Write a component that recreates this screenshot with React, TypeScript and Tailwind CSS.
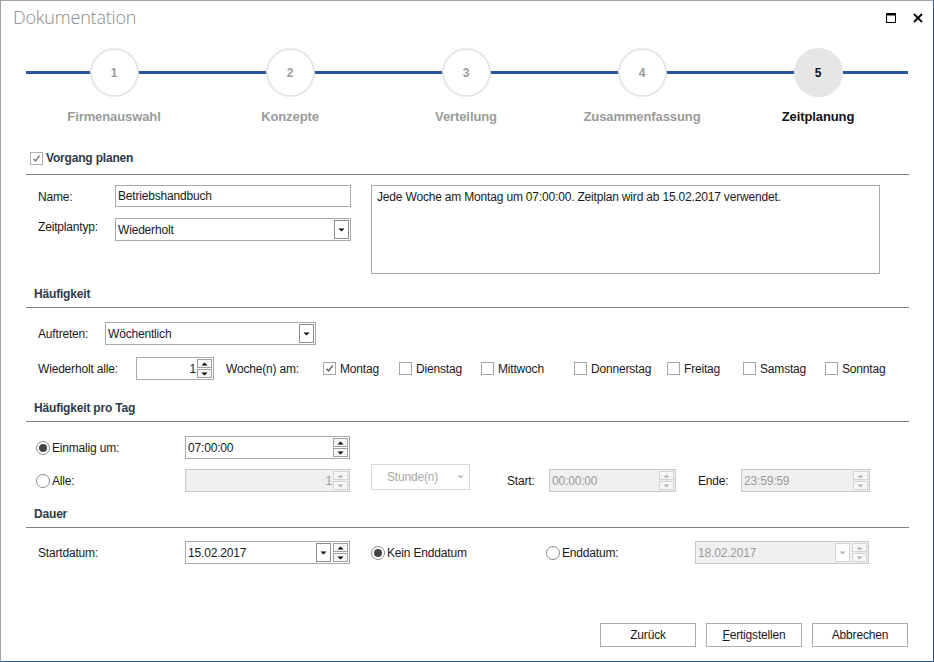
import React from "react";

const F = { fontFamily: '"Liberation Sans", Arial, sans-serif' };

function Arrow({ dir = "down", disabled = false }: { dir?: "up" | "down"; disabled?: boolean }) {
  const c = disabled ? "#b5b5b5" : "#000";
  return (
    <svg width="7" height="4" viewBox="0 0 7 4">
      {dir === "down" ? <polygon points="0.5,0.5 6.5,0.5 3.5,3.5" fill={c} /> : <polygon points="0.5,3.5 6.5,3.5 3.5,0.5" fill={c} />}
    </svg>
  );
}

function Spin({ disabled = false }: { disabled?: boolean }) {
  const b = disabled ? "border-[#d4d4d4]" : "border-[#a0a0a0]";
  return (
    <div className="flex flex-col gap-[1px] mr-[1px]">
      <div className={`w-[15px] h-[9px] border ${b} bg-[#f7f7f7] flex items-center justify-center`}>
        <Arrow dir="up" disabled={disabled} />
      </div>
      <div className={`w-[15px] h-[9px] border ${b} bg-[#f7f7f7] flex items-center justify-center`}>
        <Arrow dir="down" disabled={disabled} />
      </div>
    </div>
  );
}

function DropBtn({ disabled = false }: { disabled?: boolean }) {
  return (
    <div className={`w-[15px] h-[19px] border ${disabled ? "border-[#d4d4d4]" : "border-[#8c8c8c]"} bg-white flex items-center justify-center mr-[1px]`}>
      <Arrow disabled={disabled} />
    </div>
  );
}

function Check({ checked = false, label }: { checked?: boolean; label: string }) {
  return (
    <div className="flex items-center gap-[4px]">
      <div className="w-[13px] h-[13px] border border-[#a6a6a6] bg-white flex items-center justify-center">
        {checked && (
          <svg width="9" height="9" viewBox="0 0 9 9">
            <path d="M1.5 4.8 L3.6 7 L7.6 1.6" stroke="#5a5a5a" strokeWidth="1.4" fill="none" />
          </svg>
        )}
      </div>
      <span className="text-[12px] text-[#1a1a1a]">{label}</span>
    </div>
  );
}

function Radio({ checked = false, label }: { checked?: boolean; label: string }) {
  return (
    <div className="flex items-center gap-[2px]">
      <div className="w-[14px] h-[14px] rounded-full border border-[#8a8a8a] bg-white flex items-center justify-center">
        {checked && <div className="w-[8px] h-[8px] rounded-full bg-[#444]" />}
      </div>
      <span className="text-[12px] text-[#1a1a1a]">{label}</span>
    </div>
  );
}

function Header({ text }: { text: string }) {
  return (
    <>
      <div className="pl-[8px] h-[16px] leading-[16px] text-[12px] font-bold text-[#2e3a48]">{text}</div>
      <div className="mt-[5px] h-[1px] bg-[#7f7f7f]" />
    </>
  );
}

const steps = ["Firmenauswahl", "Konzepte", "Verteilung", "Zusammenfassung", "Zeitplanung"];

export default function App() {
  return (
    <div
      style={F}
      className="w-[934px] h-[662px] bg-white border-l border-t border-[#a3a3a3] border-r border-b border-r-[#2b579a] border-b-[#2b579a] flex flex-col text-[12px] tracking-[-0.18px] text-[#1a1a1a] overflow-hidden"
    >
      {/* Title bar */}
      <div className="h-[33px] flex items-center pl-[12px] pr-[10px]">
        <div className="text-[18px] text-[#8a8a8a] tracking-[-0.2px]" style={{ fontFamily: '"Open Sans", "Liberation Sans", sans-serif', fontWeight: 300 }}>
          Dokumentation
        </div>
        <div className="ml-auto flex items-center gap-[17px] mt-[1px]">
          <svg width="10" height="10" viewBox="0 0 10 10">
            <rect x="0.5" y="0.5" width="9" height="9" fill="none" stroke="#000" strokeWidth="1" />
            <rect x="0" y="0" width="10" height="2.5" fill="#000" />
          </svg>
          <svg width="10" height="10" viewBox="0 0 10 10">
            <path d="M1 1 L9 9 M9 1 L1 9" stroke="#000" strokeWidth="1.8" />
          </svg>
        </div>
      </div>

      {/* Stepper */}
      <div className="relative pl-[25px] mt-[1px]">
        <div className="absolute left-[25px] top-[36px] w-[882px] h-[3px] bg-[#2b579a]" />
        <div className="relative grid grid-cols-[repeat(5,176px)] mt-[13px]">
          {steps.map((s, i) => {
            const active = i === 4;
            return (
              <div key={s} className="flex flex-col items-center">
                <div
                  className={`w-[49px] h-[49px] rounded-full flex items-center justify-center text-[12px] font-bold ${
                    active ? "bg-[#e6e6e6] text-[#111]" : "bg-white border-2 border-[#e6e6e6] text-[#9a9a9a]"
                  }`}
                >
                  {i + 1}
                </div>
                <div className={`mt-[12px] h-[16px] leading-[16px] text-[13px] font-bold tracking-[-0.1px] ${active ? "text-[#111]" : "text-[#9a9a9a]"}`}>{s}</div>
              </div>
            );
          })}
        </div>
      </div>

      {/* Content */}
      <div className="pl-[25px] w-[908px] flex flex-col">
        <div className="mt-[25px] pl-[4px] h-[16px] flex items-center">
          <div className="flex items-center gap-[3px]">
            <div className="w-[13px] h-[13px] border border-[#b0b0b0] bg-white flex items-center justify-center">
              <svg width="9" height="9" viewBox="0 0 9 9">
                <path d="M1.5 4.8 L3.6 7 L7.6 1.6" stroke="#7a7a7a" strokeWidth="1.4" fill="none" />
              </svg>
            </div>
            <span className="text-[12px] font-bold text-[#2e3a48]">Vorgang planen</span>
          </div>
        </div>
        <div className="mt-[8px] h-[1px] bg-[#7f7f7f]" />

        {/* Name / type */}
        <div className="mt-[10px] flex">
          <div className="w-[345px] flex flex-col gap-[11px]">
            <div className="flex items-center h-[22px]">
              <div className="pl-[12px] w-[89px] mt-[1px]">Name:</div>
              <div className="w-[236px] h-[22px] border border-[#a9a9a9] flex items-center pl-[2px]">Betriebshandbuch</div>
            </div>
            <div className="flex items-center h-[23px]">
              <div className="pl-[12px] w-[89px] -mt-[5px]">Zeitplantyp:</div>
              <div className="w-[236px] h-[23px] border border-[#a9a9a9] flex items-center pl-[2px]">
                <span className="pt-[1px]">Wiederholt</span>
                <div className="ml-auto"><DropBtn /></div>
              </div>
            </div>
          </div>
          <div className="w-[509px] h-[89px] border border-[#a9a9a9] px-[5px] pt-[2px]">
            Jede Woche am Montag um 07:00:00. Zeitplan wird ab 15.02.2017 verwendet.
          </div>
        </div>

        <div className="mt-[12px]">
          <Header text="Häufigkeit" />
        </div>

        <div className="mt-[14px] flex items-center h-[23px]">
          <div className="pl-[12px] w-[79px]">Auftreten:</div>
          <div className="w-[211px] h-[23px] border border-[#a9a9a9] flex items-center pl-[2px]">
            <span>Wöchentlich</span>
            <div className="ml-auto"><DropBtn /></div>
          </div>
        </div>

        <div className="mt-[12px] flex items-center h-[23px]">
          <div className="pl-[12px] w-[110px]">Wiederholt alle:</div>
          <div className="w-[78px] h-[23px] border border-[#a9a9a9] flex items-center justify-end">
            <span className="mr-[1px]">1</span>
            <Spin />
          </div>
          <div className="ml-[12px] w-[97px]">Woche(n) am:</div>
          <div className="w-[76px]"><Check checked label="Montag" /></div>
          <div className="w-[82px]"><Check label="Dienstag" /></div>
          <div className="w-[93px]"><Check label="Mittwoch" /></div>
          <div className="w-[93px]"><Check label="Donnerstag" /></div>
          <div className="w-[76px]"><Check label="Freitag" /></div>
          <div className="w-[82px]"><Check label="Samstag" /></div>
          <div><Check label="Sonntag" /></div>
        </div>

        <div className="mt-[20px]">
          <Header text="Häufigkeit pro Tag" />
        </div>

        <div className="mt-[14px] flex items-center h-[23px]">
          <div className="pl-[10px] w-[159px] mt-[1px]"><Radio checked label="Einmalig um:" /></div>
          <div className="w-[165px] h-[23px] border border-[#a9a9a9] flex items-center pl-[2px]">
            <span className="pt-[1px]">07:00:00</span>
            <div className="ml-auto"><Spin /></div>
          </div>
        </div>

        <div className="mt-[10px] flex items-center h-[23px]">
          <div className="pl-[10px] w-[159px]"><Radio label="Alle:" /></div>
          <div className="w-[165px] h-[23px] border border-[#c8c8c8] bg-[#f0f0f0] flex items-center justify-end text-[#9a9a9a]">
            <span className="mr-[1px]">1</span>
            <Spin disabled />
          </div>
          <div className="ml-[21px] w-[99px] h-[26px] -mt-[7px] border border-[#d9d9d9] bg-white flex items-center text-[#a8a8a8]">
            <span className="pl-[15px]">Stunde(n)</span>
            <div className="ml-auto mr-[5px]"><Arrow disabled /></div>
          </div>
          <div className="ml-[37px] w-[42px]">Start:</div>
          <div className="w-[127px] h-[23px] border border-[#c8c8c8] bg-[#f0f0f0] flex items-center pl-[2px] text-[#9a9a9a]">
            <span className="pt-[1px]">00:00:00</span>
            <div className="ml-auto"><Spin disabled /></div>
          </div>
          <div className="ml-[22px] w-[43px]">Ende:</div>
          <div className="w-[129px] h-[23px] border border-[#c8c8c8] bg-[#f0f0f0] flex items-center pl-[2px] text-[#9a9a9a]">
            <span className="pt-[1px]">23:59:59</span>
            <div className="ml-auto"><Spin disabled /></div>
          </div>
        </div>

        <div className="mt-[14px]">
          <Header text="Dauer" />
        </div>

        <div className="mt-[13px] flex items-center h-[23px]">
          <div className="pl-[12px] w-[159px] mt-[1px]">Startdatum:</div>
          <div className="w-[165px] h-[23px] border border-[#a9a9a9] flex items-center pl-[2px]">
            <span className="pt-[1px]">15.02.2017</span>
            <div className="ml-auto flex items-center gap-[1px]">
              <DropBtn />
              <Spin />
            </div>
          </div>
          <div className="ml-[21px] w-[175px]"><Radio checked label="Kein Enddatum" /></div>
          <div className="w-[149px]"><Radio label="Enddatum:" /></div>
          <div className="w-[174px] h-[23px] border border-[#c8c8c8] bg-[#f0f0f0] flex items-center pl-[2px] text-[#9a9a9a]">
            <span className="pt-[1px]">18.02.2017</span>
            <div className="ml-auto flex items-center gap-[1px]">
              <DropBtn disabled />
              <Spin disabled />
            </div>
          </div>
        </div>
      </div>

      {/* Buttons */}
      <div className="mt-auto mb-[14px] flex justify-end gap-[10px] pr-[25px]">
        {["Zurück", "Fertigstellen", "Abbrechen"].map((b) => (
          <div key={b} className="w-[96px] h-[24px] border border-[#adadad] bg-white flex items-center justify-center">
            {b === "Fertigstellen" ? (
              <span>
                <span className="underline">F</span>ertigstellen
              </span>
            ) : (
              b
            )}
          </div>
        ))}
      </div>
    </div>
  );
}
